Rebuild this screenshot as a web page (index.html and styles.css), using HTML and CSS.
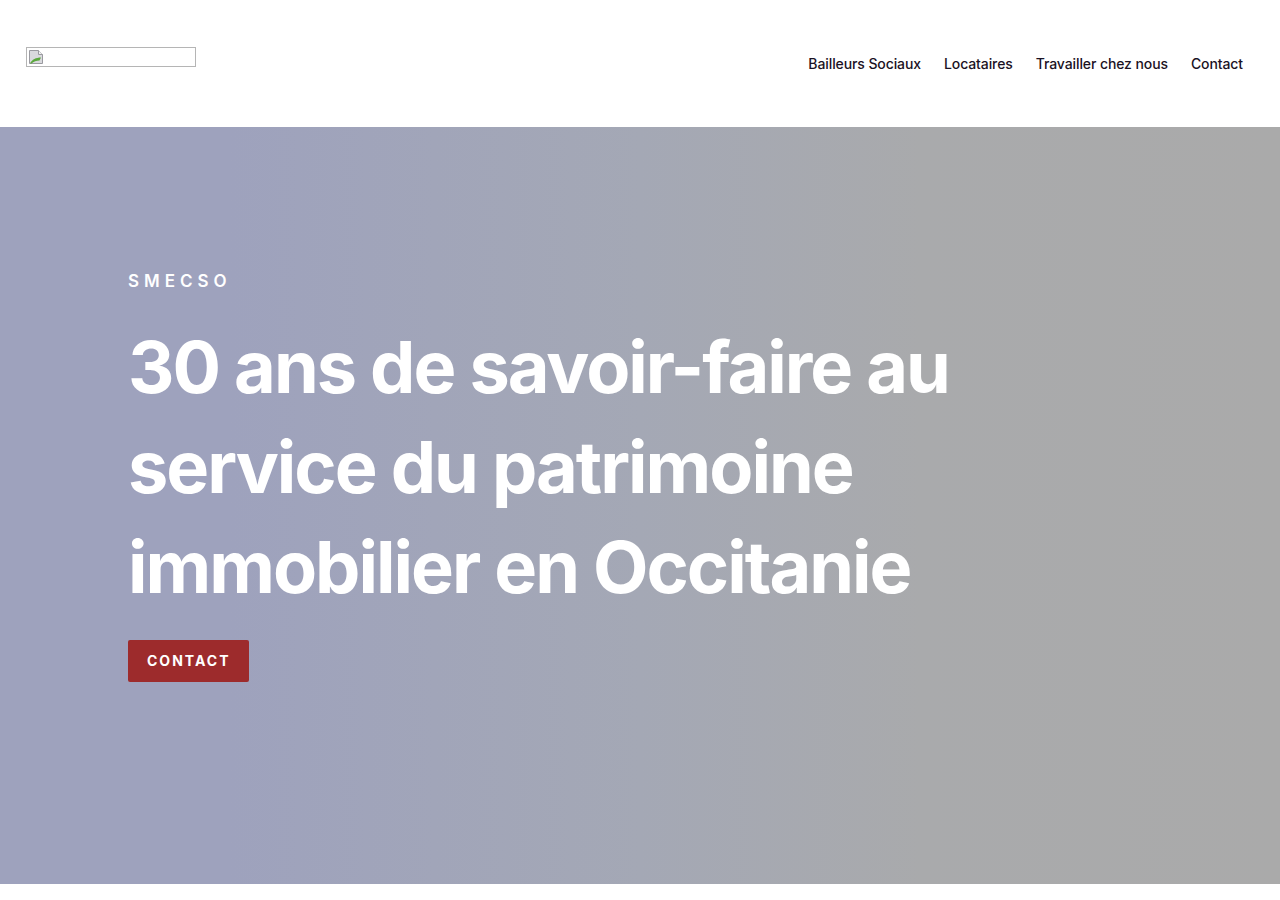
FILE: index.html
```html
<!DOCTYPE html>
<html lang="fr">
<head>
  <meta charset="UTF-8">
  <meta name="viewport" content="width=device-width, initial-scale=1.0">
  <title>SMECSO</title>
  <link rel="stylesheet" href="styles.css">
</head>
<body>
  <header class="site-header">
    <a class="logo" href="#">
      <span class="logo-missing">
        <svg width="16" height="16" viewBox="0 0 16 16">
          <path d="M1.5 1.5h9l4 4v9h-13z" fill="#d9d9dd" stroke="#9a9aa0"/>
          <path d="M10.5 1.5v4h4" fill="#f2f2f2" stroke="#9a9aa0"/>
          <path d="M2 14.5c2-4 6-6 11-6l-1.5 3c-3 0-6 1-8 3z" fill="#5aa83c"/>
        </svg>
      </span>
    </a>
    <nav class="main-nav">
      <a href="#">Bailleurs Sociaux</a>
      <a href="#">Locataires</a>
      <a href="#">Travailler chez nous</a>
      <a href="#">Contact</a>
    </nav>
  </header>

  <section class="hero">
    <div class="hero-inner">
      <p class="kicker">SMECSO</p>
      <h1>30 ans de savoir-faire au service du patrimoine immobilier en Occitanie</h1>
      <a class="btn" href="#">Contact</a>
    </div>
  </section>
</body>
</html>
```

FILE: styles.css
```css
body {
  margin: 0;
  font-family: Inter, "Noto Sans", Arial, sans-serif;
  background-color: #fff;
}
a {
  text-decoration: none;
}
.site-header {
  height: 127px;
  display: flex;
  justify-content: space-between;
  align-items: flex-start;
  padding: 0 37px 0 26px;
}
.logo {
  margin-top: 47px;
  display: block;
}
.logo-missing {
  display: block;
  width: 168px;
  height: 18px;
  border: 1px solid #b5b5b5;
}
.logo-missing svg {
  display: block;
  margin: 1px 0 0 1px;
}
.main-nav {
  display: flex;
  gap: 23px;
  margin-top: 55px;
}
.main-nav a {
  color: #1b1224;
  font-size: 14px;
  font-weight: 500;
  line-height: 18px;
  letter-spacing: -0.1px;
}
.hero {
  height: 757px;
  background: linear-gradient(90deg, #9ea2bd 0%, #9ea2bd 18%, #a4a8b5 50%, #a9aaac 72%, #aaaaaa 100%);
}
.hero-inner {
  padding: 143px 0 0 128px;
  max-width: 900px;
}
.kicker {
  margin: 0;
  color: #fff;
  font-size: 17px;
  font-weight: 600;
  letter-spacing: 5px;
  line-height: 22px;
}
h1 {
  margin: 25px 0 23px;
  color: #fff;
  font-size: 72px;
  font-weight: 700;
  line-height: 100px;
  letter-spacing: -2px;
}
.btn {
  display: inline-block;
  background-color: #9d2b2c;
  color: #fff;
  font-size: 14px;
  font-weight: 700;
  letter-spacing: 2px;
  text-transform: uppercase;
  padding: 12px 19px;
  line-height: 18px;
  border-radius: 2px;
}
```
